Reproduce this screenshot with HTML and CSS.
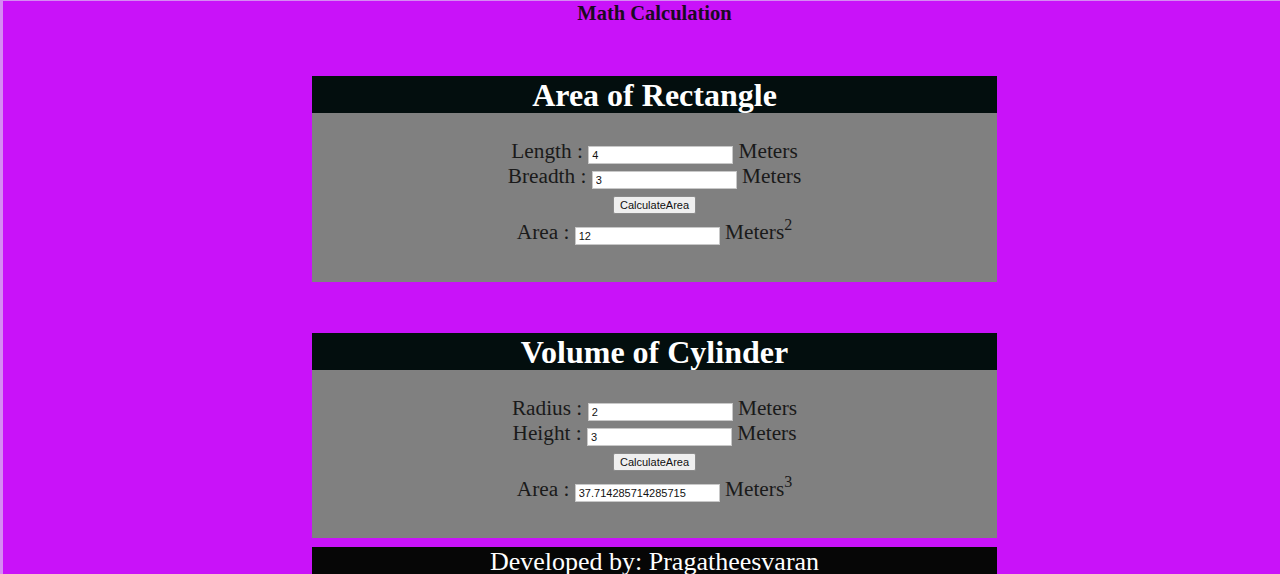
FILE: index.html
```html
<!DOCTYPE html>
<html lang="en">
<head>
<meta charset="utf-8">
<title>Math Calculation</title>
<link rel="stylesheet" href="styles.css">
</head>
<body>
<div class="page">
  <h3 class="title">Math Calculation</h3>

  <section class="card card-first">
    <h2 class="card-head">Area of Rectangle</h2>
    <div class="card-body">
      <div class="row">Length : <input class="field" type="text" value="4"> Meters</div>
      <div class="row">Breadth : <input class="field" type="text" value="3"> Meters</div>
      <div class="btn-row"><button class="btn" type="button">CalculateArea</button></div>
      <div class="row">Area : <input class="field" type="text" value="12"> Meters<sup class="sup">2</sup></div>
    </div>
  </section>

  <section class="card card-second">
    <h2 class="card-head">Volume of Cylinder</h2>
    <div class="card-body">
      <div class="row">Radius : <input class="field" type="text" value="2"> Meters</div>
      <div class="row">Height : <input class="field" type="text" value="3"> Meters</div>
      <div class="btn-row"><button class="btn" type="button">CalculateArea</button></div>
      <div class="row">Area : <input class="field" type="text" value="37.714285714285715"> Meters<sup class="sup">3</sup></div>
    </div>
  </section>

  <footer class="footer">Developed by: Pragatheesvaran</footer>
</div>
</body>
</html>
```

FILE: styles.css
```css
html, body {
  margin: 0;
  padding: 0;
  background: #c912f9;
}

body {
  font-family: "Liberation Serif", "Times New Roman", serif;
  color: #1a1a1a;
  overflow: hidden;
}

.page {
  border-top: 1px solid #d68af3;
  border-left: 3px solid #d68af3;
  padding-left: 26px;
  min-height: 574px;
  box-sizing: border-box;
}

.title {
  margin: 0;
  padding-top: 2px;
  height: 73px;
  font-size: 20.5px;
  line-height: 21px;
  font-weight: bold;
  text-align: center;
  color: #1b0a22;
}

.card {
  width: 685px;
  margin: 0 auto;
}

.card-second {
  margin-top: 51px;
}

.card-head {
  margin: 0;
  height: 37px;
  line-height: 38px;
  background: #030e0e;
  color: #ffffff;
  font-size: 32px;
  font-weight: bold;
  text-align: center;
}

.card-body {
  background: #808080;
  padding: 26px 0 37px;
  display: flex;
  flex-direction: column;
  align-items: center;
  font-size: 21.3px;
  color: #1a1a1a;
}

.card-second .card-body {
  padding-top: 26px;
  padding-bottom: 36px;
}

.row {
  height: 25px;
  line-height: 25px;
  white-space: nowrap;
}

.field {
  box-sizing: border-box;
  width: 145px;
  height: 18px;
  padding: 1px 3px 0;
  border: 1px solid #c8c8c8;
  background: #ffffff;
  font-family: "Liberation Sans", Arial, sans-serif;
  font-size: 11px;
  color: #111111;
  vertical-align: -1px;
}

.btn-row {
  margin: 7px 0 6px;
  height: 18px;
  display: flex;
}

.btn {
  box-sizing: border-box;
  width: 83px;
  height: 18px;
  padding: 0;
  border: 1px solid #8a8a8a;
  border-radius: 2px;
  background: #efefef;
  font-family: "Liberation Sans", Arial, sans-serif;
  font-size: 11px;
  color: #111111;
}

.sup {
  font-size: 16px;
  line-height: 0;
  vertical-align: 9px;
}

.footer {
  width: 685px;
  margin: 9px auto 0;
  height: 40px;
  background: #060606;
  color: #ffffff;
  font-size: 26px;
  line-height: 29px;
  text-align: center;
}
```
